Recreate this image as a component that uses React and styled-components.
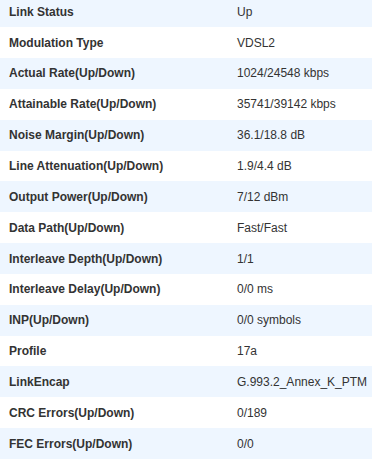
import React from "react";
import styled, { createGlobalStyle } from "styled-components";

const GlobalStyle = createGlobalStyle`
  html, body {
    margin: 0;
    padding: 0;
    background: #ffffff;
  }
  body {
    font-family: "Liberation Sans", Arial, sans-serif;
    font-size: 12px;
    color: #333333;
  }
`;

// the status list is scrolled so that its last row sits on the bottom edge
const Page = styled.div`
  height: 100vh;
  overflow: hidden;
  display: flex;
  flex-direction: column;
  justify-content: flex-end;
`;

const Table = styled.div`
  display: flex;
  flex-direction: column;
  flex-shrink: 0;
`;

const Row = styled.div`
  display: grid;
  grid-template-columns: 228px 1fr;
  align-items: center;
  height: 30.85px;
  flex-shrink: 0;
  padding-left: 9px;
  background: ${(p) => (p.$striped ? "#eef6ff" : "#ffffff")};
`;

const Label = styled.span`
  font-weight: bold;
  color: #333333;
  white-space: nowrap;
`;

const Value = styled.span`
  color: #333333;
  white-space: nowrap;
`;

const stats = [
  ["Link Status", "Up"],
  ["Modulation Type", "VDSL2"],
  ["Actual Rate(Up/Down)", "1024/24548 kbps"],
  ["Attainable Rate(Up/Down)", "35741/39142 kbps"],
  ["Noise Margin(Up/Down)", "36.1/18.8 dB"],
  ["Line Attenuation(Up/Down)", "1.9/4.4 dB"],
  ["Output Power(Up/Down)", "7/12 dBm"],
  ["Data Path(Up/Down)", "Fast/Fast"],
  ["Interleave Depth(Up/Down)", "1/1"],
  ["Interleave Delay(Up/Down)", "0/0 ms"],
  ["INP(Up/Down)", "0/0 symbols"],
  ["Profile", "17a"],
  ["LinkEncap", "G.993.2_Annex_K_PTM"],
  ["CRC Errors(Up/Down)", "0/189"],
  ["FEC Errors(Up/Down)", "0/0"],
];

export default function App() {
  return (
    <>
      <GlobalStyle />
      <Page>
        <Table>
          {stats.map(([label, value], i) => (
            <Row key={label} $striped={i % 2 === 0}>
              <Label>{label}</Label>
              <Value>{value}</Value>
            </Row>
          ))}
        </Table>
      </Page>
    </>
  );
}
